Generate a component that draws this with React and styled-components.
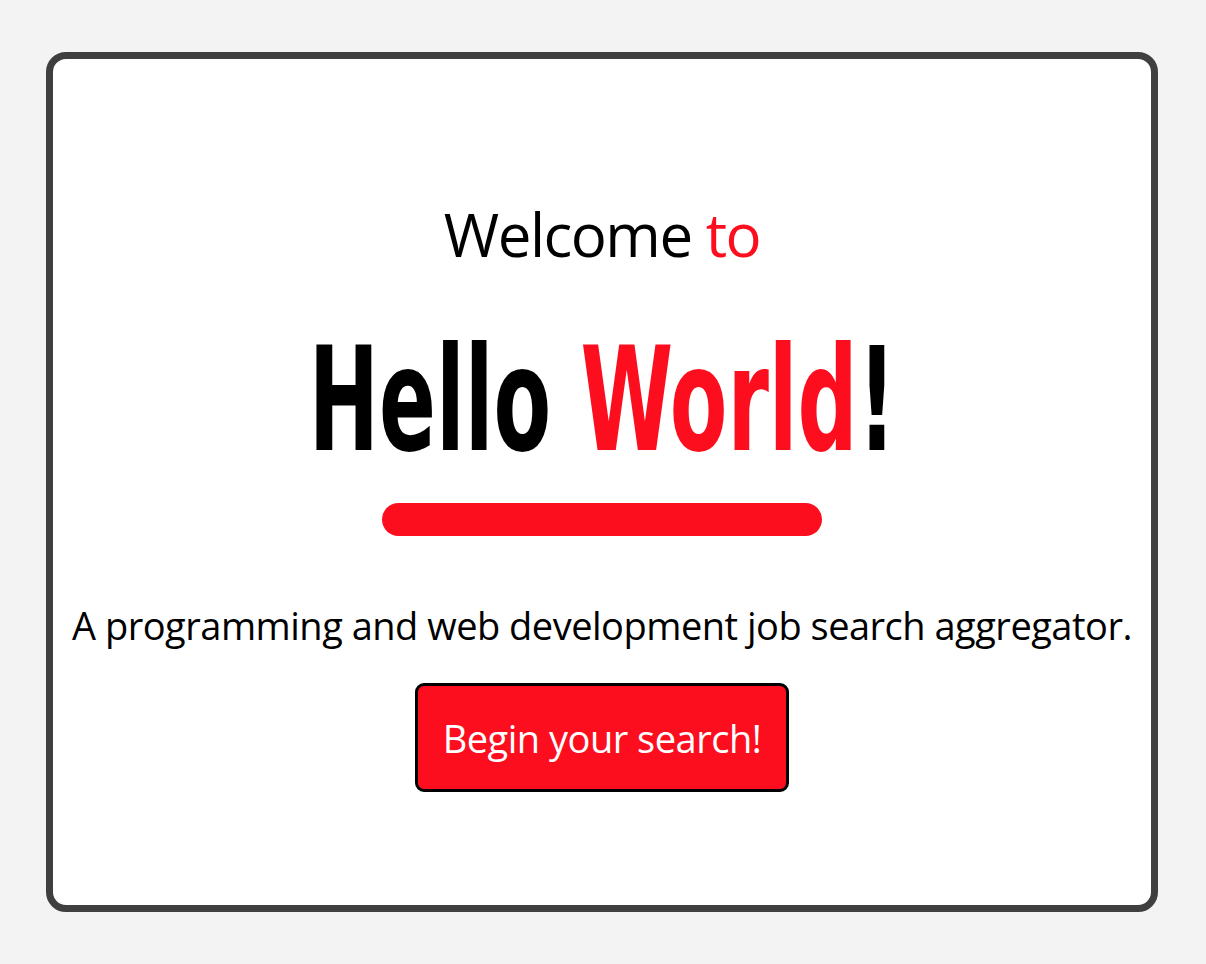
import styled, { createGlobalStyle } from "styled-components";

const GlobalStyle = createGlobalStyle`
  html, body {
    margin: 0;
    padding: 0;
    background: #f3f3f3;
  }
  body {
    font-family: "Open Sans", "Noto Sans", sans-serif;
  }
`;

const red = "#fd0e1f";

const Page = styled.div`
  padding: 52px 48px 52px 46px;
`;

const Card = styled.main`
  box-sizing: border-box;
  height: 860px;
  background: #fff;
  border: 7px solid #3f3f3f;
  border-radius: 20px;
  padding-top: 145px;
  display: flex;
  flex-direction: column;
  align-items: center;
  text-align: center;
  color: #000;
`;

const Welcome = styled.h2`
  margin: 0;
  font-size: 60px;
  line-height: 60px;
  font-weight: 400;
  letter-spacing: -1.5px;
`;

const Accent = styled.span`
  color: ${red};
`;

const Title = styled.h1`
  margin: 77px 0 0;
  font-family: "DejaVu Sans Condensed", "DejaVu Sans", sans-serif;
  font-weight: 700;
  font-size: 119px;
  line-height: 119px;
  white-space: nowrap;
  transform: scale(0.784, 1.22);
`;

const Bar = styled.div`
  width: 440px;
  height: 33px;
  margin-top: 43px;
  border-radius: 17px;
  background: ${red};
`;

const Tagline = styled.p`
  margin: 70px 0 0;
  font-size: 38px;
  line-height: 38px;
  letter-spacing: -0.5px;
`;

const SearchButton = styled.button`
  margin-top: 39px;
  height: 109px;
  padding: 0 25px;
  background: ${red};
  color: #fff;
  border: 3px solid #000;
  border-radius: 9px;
  font-family: inherit;
  font-size: 38px;
  letter-spacing: -0.5px;
  cursor: pointer;
`;

export default function App() {
  return (
    <>
      <GlobalStyle />
      <Page>
        <Card>
          <Welcome>
            Welcome <Accent>to</Accent>
          </Welcome>
          <Title>
            Hello <Accent>World</Accent>!
          </Title>
          <Bar />
          <Tagline>A programming and web development job search aggregator.</Tagline>
          <SearchButton>Begin your search!</SearchButton>
        </Card>
      </Page>
    </>
  );
}
